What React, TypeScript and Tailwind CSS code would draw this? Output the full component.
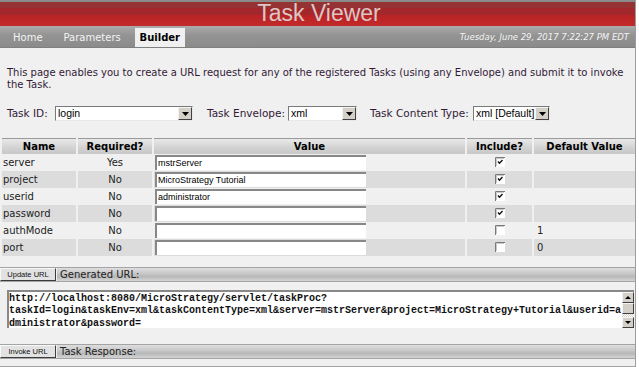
import React from 'react';

const rows = [
  { name: 'server', req: 'Yes', value: 'mstrServer', inc: true, def: '' },
  { name: 'project', req: 'No', value: 'MicroStrategy Tutorial', inc: true, def: '' },
  { name: 'userid', req: 'No', value: 'administrator', inc: true, def: '' },
  { name: 'password', req: 'No', value: '', inc: true, def: '' },
  { name: 'authMode', req: 'No', value: '', inc: false, def: '1' },
  { name: 'port', req: 'No', value: '', inc: false, def: '0' },
];

const cols = 'grid grid-cols-[74px_74px_311px_65px_101px] gap-x-[2px] pl-[2px]';

function Arrow() {
  return (
    <div className="h-full w-[14px] shrink-0 bg-[#d4d0c8] border border-t-[#f4f4f4] border-l-[#f4f4f4] border-r-[#404040] border-b-[#404040] flex items-center justify-center">
      <svg width="7" height="4" viewBox="0 0 7 4">
        <path d="M0 0H7L3.5 4Z" fill="#000" />
      </svg>
    </div>
  );
}

function Select({ value, width }: { value: string; width: string }) {
  return (
    <div className={`${width} h-[15px] shrink-0 bg-white flex border border-t-[#7a7a7a] border-l-[#7a7a7a] border-r-[#e8e8e8] border-b-[#e8e8e8]`}>
      <span className="flex-1 pl-[2px] text-[10.5px] leading-[13px] text-black font-['Liberation_Sans',sans-serif] overflow-hidden whitespace-nowrap">
        {value}
      </span>
      <Arrow />
    </div>
  );
}

function Check({ on }: { on: boolean }) {
  return (
    <svg width="10" height="10" viewBox="0 0 10 10">
      <rect x="0" y="0" width="10" height="10" fill="#fff" />
      <path d="M0.5 10V0.5H10" stroke="#7a7a7a" fill="none" />
      <path d="M1.5 9V1.5H9" stroke="#c8c8c8" fill="none" />
      {on && <path d="M3 4.5L4.5 6.2L7.5 3" stroke="#111" strokeWidth="1.4" fill="none" />}
    </svg>
  );
}

function Bar({ button, label }: { button: string; label: string }) {
  return (
    <div className="flex h-[15px] border-y border-[#a4a4a4]">
      <div className="w-[56px] h-[13px] bg-[#e2e2e2] border border-t-[#f8f8f8] border-l-[#f8f8f8] border-r-[#3c3c3c] border-b-[#3c3c3c] flex items-center justify-center text-[7.5px] text-[#111] font-['Liberation_Sans',sans-serif]">
        {button}
      </div>
      <div className="flex-1 ml-[1px] bg-[linear-gradient(to_bottom,#dedede,#c6c6c6_45%,#b8b8b8_65%,#d4d4d4)] pl-[3px] text-[10px] leading-[13px] text-[#222]">
        {label}
      </div>
    </div>
  );
}

export default function App() {
  return (
    <div className="w-[636px] min-h-[367px] bg-[#eff0ef] border-r border-[#9c9c9c] font-['DejaVu_Sans',sans-serif]">
      {/* title */}
      <div className="border-t-2 border-[#8a8a8a] h-[26px] bg-[linear-gradient(to_bottom,#953234_0%,#953234_26%,#a3282b_26%,#a3282b_54%,#b72325_54%,#c42a2a_100%)] flex items-center justify-center">
        <span className="text-[23px] leading-none text-[#dcc6c6] font-['Liberation_Sans',sans-serif] -mt-[2px] ml-[3px]">Task Viewer</span>
      </div>
      <div className="h-[2px] bg-[#a9a9a9]" />

      {/* nav */}
      <div className="h-[20px] flex items-stretch bg-[linear-gradient(to_bottom,#a6a6a6,#939393_40%,#8b8b8b)] border-b border-[#808080]">
        <div className="pl-[13px] pr-[21px] flex items-center text-[10px] text-[#f4f4f4]">Home</div>
        <div className="pr-[14px] flex items-center text-[10px] text-[#f4f4f4]">Parameters</div>
        <div className="w-[50px] bg-[#eff0ef] flex items-center justify-center text-[10px] font-bold text-black">Builder</div>
        <div className="flex-1 flex items-center justify-end pr-[6px] text-[8.5px] italic text-[#f4f4f4]">
          Tuesday, June 29, 2017 7:22:27 PM EDT
        </div>
      </div>

      {/* intro */}
      <p className="pt-[19px] px-[7px] text-[10px] leading-[12px] text-[#331a38]">
        This page enables you to create a URL request for any of the registered Tasks (using any Envelope) and submit it to invoke the Task.
      </p>

      <div className="mt-[15px] pl-[7px] flex items-center text-[10.5px] text-[#331a38]">
        <span className="w-[48px]">Task ID:</span>
        <Select value="login" width="w-[138px]" />
        <span className="ml-[14px] w-[81px]">Task Envelope:</span>
        <Select value="xml" width="w-[69px]" />
        <span className="ml-[13px] w-[103px]">Task Content Type:</span>
        <Select value="xml [Default]" width="w-[77px]" />
      </div>

      {/* table */}
      <div className="mt-[16px]">
        <div className={`${cols} h-[16px] text-[10px] font-bold text-black`}>
          {['Name', 'Required?', 'Value', 'Include?', 'Default Value'].map((h) => (
            <div key={h} className="border-t border-[#9a9a9a] bg-[linear-gradient(to_bottom,#e8e8e8,#d2d2d2_60%,#c8c8c8)] flex items-center justify-center">
              {h}
            </div>
          ))}
        </div>
        {rows.map((r, i) => (
          <div key={r.name} className={`${cols} h-[17px] text-[10px] text-[#222]`}>
            {[0, 1, 2, 3, 4].map((c) => (
              <div key={c} className={`${i % 2 ? 'bg-[#dcdcdc]' : ''} flex items-center ${c === 1 || c === 3 ? 'justify-center' : ''}`}>
                {c === 0 && <span className="pl-[1px]">{r.name}</span>}
                {c === 1 && r.req}
                {c === 2 && (
                  <div className="ml-[1px] w-[211px] h-[15px] bg-white border-t-2 border-l-2 border-t-[#888] border-l-[#888] pl-[1px] text-[9px] leading-[12px] text-black font-['Liberation_Sans',sans-serif]">
                    {r.value}
                  </div>
                )}
                {c === 3 && <Check on={r.inc} />}
                {c === 4 && <span className="pl-[3px]">{r.def}</span>}
              </div>
            ))}
          </div>
        ))}
      </div>

      {/* generated url */}
      <div className="mt-[11px]">
        <Bar button="Update URL" label="Generated URL:" />
      </div>
      <div className="mt-[8px] ml-[7px] w-[627px] h-[38px] bg-white border-t-2 border-l-2 border-t-[#888] border-l-[#888] flex">
        <div className="flex-1 pt-[1px] font-['Liberation_Mono',monospace] font-bold text-[10px] leading-[12.5px] text-[#111] whitespace-pre">
          <div>http://localhost:8080/MicroStrategy/servlet/taskProc?</div>
          <div>taskId=login&amp;taskEnv=xml&amp;taskContentType=xml&amp;server=mstrServer&amp;project=MicroStrategy+Tutorial&amp;userid=a</div>
          <div>dministrator&amp;password=</div>
        </div>
        <div className="w-[12px] flex flex-col bg-[repeating-conic-gradient(#ffffff_0%_25%,#d4d0c8_0%_50%)] bg-[length:2px_2px]">
          <div className="h-[11px] bg-[#d4d0c8] border border-t-[#f4f4f4] border-l-[#f4f4f4] border-r-[#404040] border-b-[#404040] flex items-center justify-center">
            <svg width="6" height="3" viewBox="0 0 6 3"><path d="M0 3H6L3 0Z" fill="#000" /></svg>
          </div>
          <div className="h-[11px] bg-[#d4d0c8] border border-t-[#f4f4f4] border-l-[#f4f4f4] border-r-[#404040] border-b-[#404040]" />
          <div className="flex-1" />
          <div className="h-[11px] bg-[#d4d0c8] border border-t-[#f4f4f4] border-l-[#f4f4f4] border-r-[#404040] border-b-[#404040] flex items-center justify-center">
            <svg width="6" height="3" viewBox="0 0 6 3"><path d="M0 0H6L3 3Z" fill="#000" /></svg>
          </div>
        </div>
      </div>

      {/* task response */}
      <div className="mt-[16px]">
        <Bar button="Invoke URL" label="Task Response:" />
      </div>
      <div className="mt-[7px] border-t border-[#a4a4a4]" />
    </div>
  );
}
